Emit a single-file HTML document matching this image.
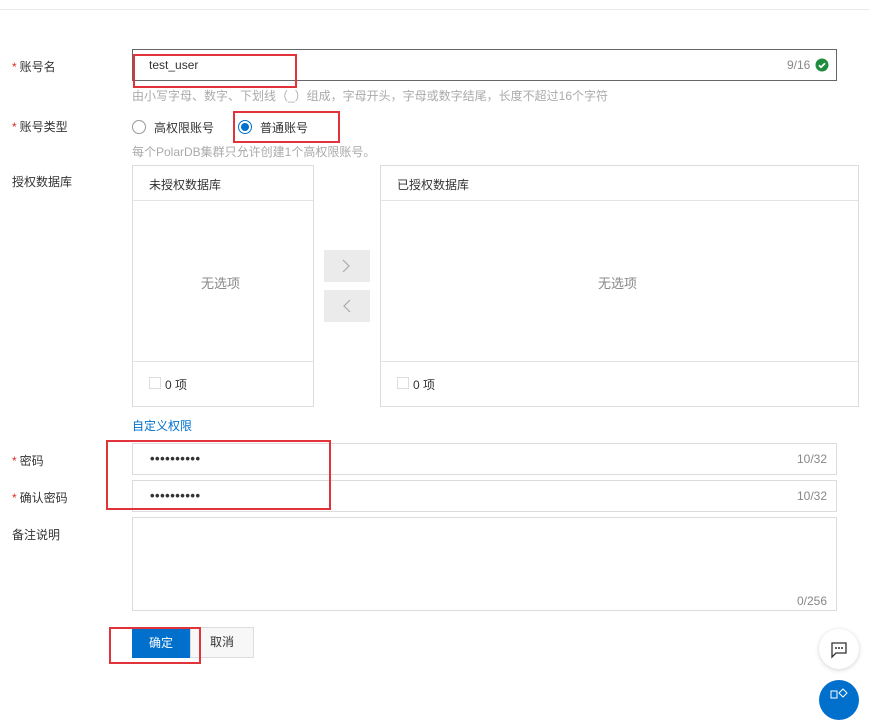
<!DOCTYPE html>
<html><head><meta charset="utf-8"><style>
*{box-sizing:border-box;margin:0;padding:0}
body{width:869px;height:699px;background:#fff;position:relative;overflow:hidden;font-family:"Liberation Sans","Noto Sans CJK SC",sans-serif;font-size:12px;color:#333}
.a{position:absolute;white-space:nowrap}
.lbl{position:absolute;left:12px;font-size:12px;color:#333}
.lbl i{color:#d93026;font-style:normal;margin-right:3px}
.box{position:absolute;border:1px solid #dcdcdc;background:#fff}
.red{position:absolute;border:2px solid #e0343a}
.hint{position:absolute;left:132px;color:#aaa;font-size:12px}
.cnt{position:absolute;color:#888;font-size:12px}
.dots{position:absolute;left:150px;font-size:13px;letter-spacing:0.5px;color:#333;font-weight:bold}
</style></head><body>
<div class="a" style="left:0;top:9px;width:869px;height:1px;background:#e8e8e8"></div>

<div class="lbl" style="top:58px"><i>*</i>账号名</div>
<div class="box" style="left:132px;top:49px;width:705px;height:32px;border-color:#666"></div>
<div class="a" style="left:149px;top:58px;font-size:12px">test_user</div>
<div class="cnt" style="left:787px;top:58px">9/16</div>
<svg class="a" style="left:815px;top:58px" width="14" height="14" viewBox="0 0 14 14"><circle cx="7" cy="7" r="6.5" fill="#1e8e3e"/><path d="M4 7.2l2 2 4-4" stroke="#fff" stroke-width="1.8" fill="none"/></svg>
<div class="red" style="left:133px;top:54px;width:164px;height:34px"></div>
<div class="hint" style="top:87px">由小写字母、数字、下划线（_）组成，字母开头，字母或数字结尾，长度不超过16个字符</div>

<div class="lbl" style="top:118px"><i>*</i>账号类型</div>
<div class="a" style="left:132px;top:120px;width:14px;height:14px;border:1px solid #999;border-radius:50%"></div>
<div class="a" style="left:154px;top:119px">高权限账号</div>
<div class="a" style="left:238px;top:120px;width:14px;height:14px;border:1px solid #0070cc;border-radius:50%"></div>
<div class="a" style="left:241px;top:123px;width:8px;height:8px;background:#0070cc;border-radius:50%"></div>
<div class="a" style="left:260px;top:119px">普通账号</div>
<div class="red" style="left:233px;top:111px;width:107px;height:32px"></div>
<div class="hint" style="top:143px">每个PolarDB集群只允许创建1个高权限账号。</div>

<div class="lbl" style="top:173px">授权数据库</div>
<div class="box" style="left:132px;top:165px;width:182px;height:242px"></div>
<div class="a" style="left:133px;top:200px;width:180px;height:1px;background:#e3e3e3"></div>
<div class="a" style="left:133px;top:361px;width:180px;height:1px;background:#e3e3e3"></div>
<div class="a" style="left:149px;top:176px">未授权数据库</div>
<div class="a" style="left:201px;top:273px;color:#888;font-size:13px">无选项</div>
<div class="a" style="left:149px;top:377px;width:12px;height:12px;border:1px solid #ddd"></div>
<div class="a" style="left:165px;top:376px">0 项</div>

<div class="a" style="left:324px;top:250px;width:46px;height:32px;background:#ebebeb"></div>
<div class="a" style="left:324px;top:290px;width:46px;height:32px;background:#ebebeb"></div>
<svg class="a" style="left:341px;top:259px" width="10" height="14"><path d="M2 1l6 6-6 6" stroke="#aaa" fill="none" stroke-width="1.2"/></svg>
<svg class="a" style="left:342px;top:299px" width="10" height="14"><path d="M8 1l-6 6 6 6" stroke="#aaa" fill="none" stroke-width="1.2"/></svg>

<div class="box" style="left:380px;top:165px;width:479px;height:242px"></div>
<div class="a" style="left:381px;top:200px;width:477px;height:1px;background:#e3e3e3"></div>
<div class="a" style="left:381px;top:361px;width:477px;height:1px;background:#e3e3e3"></div>
<div class="a" style="left:397px;top:176px">已授权数据库</div>
<div class="a" style="left:598px;top:273px;color:#888;font-size:13px">无选项</div>
<div class="a" style="left:397px;top:377px;width:12px;height:12px;border:1px solid #ddd"></div>
<div class="a" style="left:413px;top:376px">0 项</div>

<div class="a" style="left:132px;top:417px;color:#0070cc">自定义权限</div>

<div class="lbl" style="top:452px"><i>*</i>密码</div>
<div class="box" style="left:132px;top:443px;width:705px;height:32px"></div>
<div class="dots" style="top:451px">••••••••••</div>
<div class="cnt" style="left:797px;top:452px">10/32</div>
<div class="lbl" style="top:489px"><i>*</i>确认密码</div>
<div class="box" style="left:132px;top:480px;width:705px;height:32px"></div>
<div class="dots" style="top:488px">••••••••••</div>
<div class="cnt" style="left:797px;top:489px">10/32</div>
<div class="red" style="left:106px;top:440px;width:225px;height:70px"></div>

<div class="lbl" style="top:526px">备注说明</div>
<div class="box" style="left:132px;top:517px;width:705px;height:94px"></div>
<div class="cnt" style="left:797px;top:594px">0/256</div>

<div class="a" style="left:132px;top:628px;width:58px;height:30px;background:#0070cc;color:#fff;text-align:center;line-height:30px">确定</div>
<div class="a" style="left:190px;top:627px;width:64px;height:31px;background:#f7f7f7;border:1px solid #ddd;text-align:center;line-height:29px">取消</div>
<div class="red" style="left:109px;top:627px;width:92px;height:37px"></div>

<div class="a" style="left:819px;top:629px;width:40px;height:40px;border-radius:50%;background:#fff;box-shadow:0 1px 5px rgba(0,0,0,.18)"></div>
<svg class="a" style="left:830px;top:641px" width="18" height="18" viewBox="0 0 18 18"><path d="M2 2h14v10H6l-4 4z" stroke="#333" fill="none" stroke-width="1.3"/><circle cx="6" cy="7" r="1" fill="#333"/><circle cx="9" cy="7" r="1" fill="#333"/><circle cx="12" cy="7" r="1" fill="#333"/></svg>
<div class="a" style="left:819px;top:680px;width:40px;height:40px;border-radius:50%;background:#0070cc"></div>
<svg class="a" style="left:830px;top:688px" width="20" height="12"><rect x="1" y="3" width="6" height="7" stroke="#fff" fill="none"/><path d="M13 1l4 4-4 4-4-4z" stroke="#fff" fill="none"/></svg>
</body></html>
